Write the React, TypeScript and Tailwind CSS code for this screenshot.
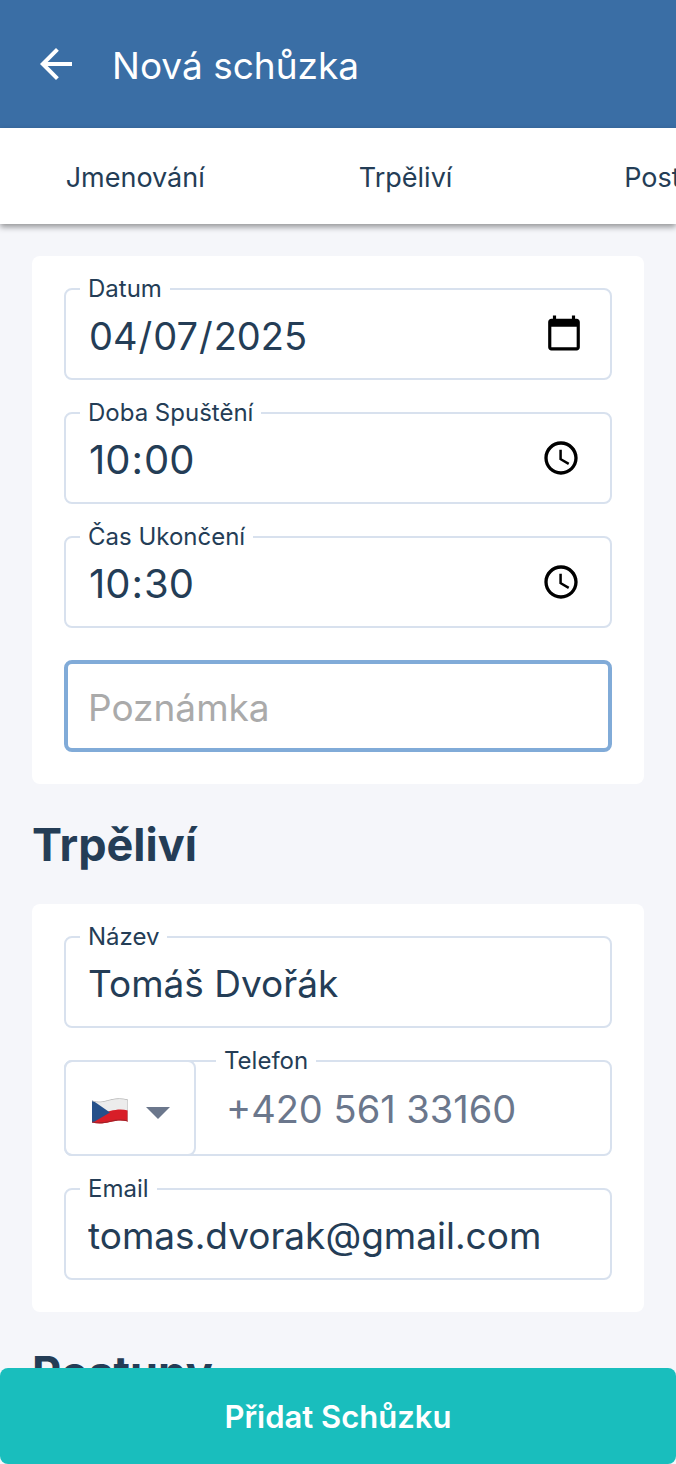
import React from 'react'

const tabs = ['Jmenování', 'Trpěliví', 'Postupy']

const fieldClass = 'block h-[92px] w-full rounded-lg border-2 border-[#d8e1ee] bg-white pl-[22px] text-[#243d56] outline-none'

const typeClasses: Record<string, string> = {
  text: 'pr-[22px] pt-0.5 text-[37px]',
  email: 'pr-[22px] pt-0.5 text-[37px]',
  date: 'pr-6 text-[38px] [&::-webkit-datetime-edit]:pt-1',
  time: 'pr-[26px] text-[40px] [&::-webkit-datetime-edit]:pt-1 [&::-webkit-datetime-edit-ampm-field]:hidden',
}

type FieldProps = {
  id: string
  label: string
  type: string
  value: string
}

const Field = ({ id, label, type, value }: FieldProps) => {
  return (
    <div className="relative">
      <label htmlFor={id} className="absolute -top-[11px] left-4 bg-white px-2 text-2xl leading-6 text-[#243d56]">
        {label}
      </label>
      <input
        id={id}
        type={type}
        defaultValue={value}
        className={`${fieldClass} ${typeClasses[type]} [&::-webkit-calendar-picker-indicator]:size-10`}
      />
    </div>
  )
}

const CzechFlag = () => {
  return (
    <svg viewBox="0 0 36 26" className="h-[26px] w-9" aria-hidden="true">
      <defs>
        <clipPath id="flag">
          <path d="M0 2.5C6 4.5 11 3.6 18 1.6C25-.2 30 0 36 1.6V23.6C30 21.8 25 22.2 18 24C11 25.8 6 26 0 24.4Z" />
        </clipPath>
      </defs>
      <g clipPath="url(#flag)">
        <rect width="36" height="26" fill="#ececec" />
        <path d="M0 14C8 15.5 12 14.5 18 13C25 11.3 30 11 36 12.5V26H0Z" fill="#d81e28" />
        <path d="M0 2L18 14.5L0 25Z" fill="#25508a" />
        <path d="M0 24C6 25.6 11 25.3 18 23.5C25 21.7 30 21.4 36 23.1" fill="none" stroke="#9f2229" strokeWidth="1.2" />
        <path d="M0 2.7C6 4.7 11 3.8 18 1.8C25 0 30 .2 36 1.8V23" fill="none" stroke="#b9b9b9" strokeWidth="1" />
      </g>
    </svg>
  )
}

const PhoneField = () => {
  return (
    <div className="relative flex h-24 rounded-lg border-2 border-[#d8e1ee]">
      <div className="relative -my-0.5 -ml-0.5 flex w-[132px] shrink-0 items-center gap-[18px] rounded-lg border-2 border-[#d8e1ee] pt-1.5 pl-[26px]">
        <CzechFlag />
        <svg viewBox="0 0 24 12" className="mt-1 h-3 w-6" aria-hidden="true">
          <path d="M0 0H24L12 12Z" fill="#6b778c" />
        </svg>
        <select aria-label="Předvolba" className="absolute inset-0 appearance-none opacity-0">
          <option>+420</option>
          <option>+421</option>
        </select>
      </div>
      <label htmlFor="phone" className="absolute -top-[13px] left-[150px] bg-white px-2 text-2xl leading-6 text-[#243d56]">
        Telefon
      </label>
      <input id="phone" type="tel" defaultValue="+420 561 33160" className="w-full min-w-0 rounded-lg px-[30px] pt-0.5 text-[38px] text-[#6b778c] outline-none" />
    </div>
  )
}

const App = () => {
  return (
    <div className="flex h-screen flex-col bg-[#f5f6fa] font-['Inter',sans-serif] text-[#243d56]">
      <header className="flex h-32 shrink-0 items-center gap-10 bg-[#3a6ea5] px-10 text-white">
        <button type="button" aria-label="Zpět">
          <svg viewBox="4 4 16 16" className="h-8 w-8" fill="currentColor" aria-hidden="true">
            <path d="M20 11H7.83l5.59-5.59L12 4l-8 8 8 8 1.41-1.41L7.83 13H20v-2z" />
          </svg>
        </button>
        <h1 className="pt-1 text-[37px]">Nová schůzka</h1>
      </header>

      <nav className="z-10 flex h-24 shrink-0 overflow-x-clip bg-white shadow-[0_3px_6px_rgba(0,0,0,0.4)]">
        {tabs.map((tab) => (
          <a key={tab} href="#" className="flex w-2/5 shrink-0 items-center justify-center pt-1 text-[27px]">
            {tab}
          </a>
        ))}
      </nav>

      <main className="min-h-0 flex-1 overflow-y-auto px-8 pt-8 [scrollbar-width:none]">
        <section className="flex flex-col gap-8 rounded-lg bg-white p-8">
          <Field id="date" label="Datum" type="date" value="2025-04-07" />
          <Field id="start" label="Doba Spuštění" type="time" value="10:00" />
          <Field id="end" label="Čas Ukončení" type="time" value="10:30" />
          <input
            type="text"
            aria-label="Poznámka"
            placeholder="Poznámka"
            className="block h-[92px] w-full rounded-lg border-4 border-[#81abd8] px-5 pt-0.5 text-[37px] outline-none placeholder:text-[#aaaaaa]"
          />
        </section>

        <h2 className="pt-[33px] pb-[31px] text-[45px] leading-[56px] font-bold">Trpěliví</h2>
        <section className="flex flex-col gap-8 rounded-lg bg-white p-8">
          <Field id="name" label="Název" type="text" value="Tomáš Dvořák" />
          <PhoneField />
          <Field id="email" label="Email" type="email" value="tomas.dvorak@gmail.com" />
        </section>

        <h2 className="pt-[33px] pb-[31px] text-[45px] leading-[56px] font-bold">Postupy</h2>
      </main>

      <button type="button" className="h-24 w-full shrink-0 rounded-lg bg-[#19bebd] pt-0.5 text-[31px] font-semibold text-white">
        Přidat Schůzku
      </button>
    </div>
  )
}

export default App
